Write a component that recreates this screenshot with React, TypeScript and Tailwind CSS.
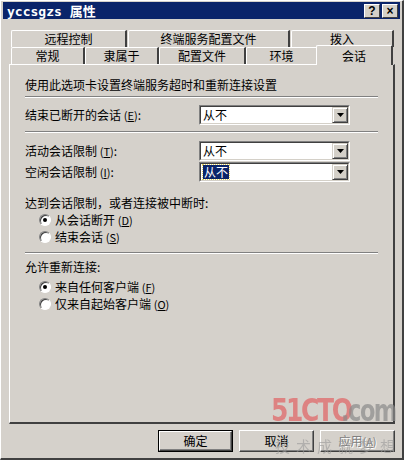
import React from 'react';

const FONT = { fontFamily: '"Noto Sans CJK SC", "Noto Sans", sans-serif' };

function Key({ k }: { k: string }) {
  return (
    <span className="text-[11px]">
      (<span className="underline">{k}</span>)
    </span>
  );
}

function Combo({ selected }: { selected?: boolean }) {
  return (
    <div className="w-[151px] h-[20px] flex border-t border-l border-t-[#808080] border-l-[#808080] border-b border-r border-b-white border-r-white">
      <div className="flex-1 flex border-t border-l border-t-[#404040] border-l-[#404040] border-b border-r border-b-[#d4d0c8] border-r-[#d4d0c8] bg-white">
        <div className="flex-1 flex items-center pl-[2px]">
          <span
            className={
              selected
                ? 'bg-[#0a246a] text-white leading-[14px] px-px outline-1 outline-dotted outline-[#e0d060]'
                : 'text-black leading-[14px]'
            }
          >
            从不
          </span>
        </div>
        <div className="w-[16px] h-[16px] bg-[#d4d0c8] flex items-center justify-center border-t border-l border-t-[#d4d0c8] border-l-[#d4d0c8] border-b border-r border-b-[#404040] border-r-[#404040] shadow-[inset_1px_1px_0_#fff,inset_-1px_-1px_0_#808080]">
          <svg width="7" height="4" viewBox="0 0 7 4">
            <path d="M0 0h7L3.5 4z" fill="#000" />
          </svg>
        </div>
      </div>
    </div>
  );
}

function Radio({ checked, children }: { checked?: boolean; children: React.ReactNode }) {
  return (
    <div className="flex items-center gap-[4px] h-[17px] pl-[29px]">
      <div className="w-[12px] h-[12px] rounded-full bg-white border border-[#808080] border-r-white border-b-white shadow-[inset_1px_1px_0_#404040] flex items-center justify-center">
        {checked && <div className="w-[4px] h-[4px] rounded-full bg-black" />}
      </div>
      <span>{children}</span>
    </div>
  );
}

function Sep() {
  return <div className="mx-[15px] h-[2px] border-t border-t-[#808080] border-b border-b-white" />;
}

function Tab({ w, label, pr }: { w: number; label: string; pr?: boolean }) {
  return (
    <div
      style={{ width: w }}
      className={
        'h-[17px] flex items-center justify-center border-t border-l border-t-white border-l-white rounded-tl-[2px] ' +
        (pr ? 'border-r-2 border-r-[#404040]' : 'border-r border-r-[#808080]')
      }
    >
      {label}
    </div>
  );
}

export default function App() {
  return (
    <div
      style={FONT}
      className="w-[404px] h-[460px] bg-[#d5d1cb] text-[12px] text-black relative overflow-hidden border-t border-l border-white border-r-2 border-b-2 border-r-[#404040] border-b-[#404040] flex flex-col"
    >
      {/* title bar */}
      <div className="mx-[2px] mt-[1px] h-[17px] bg-[#0a246a] flex items-center justify-between pl-[4px] pr-[2px]">
        <span className="text-white font-bold text-[13px] leading-none" style={{ fontFamily: '"DejaVu Sans Mono", "Noto Sans CJK SC", monospace' }}>
          yccsgzs <span style={FONT}>属性</span>
        </span>
        <div className="flex gap-[2px]">
          {['?', '×'].map((c) => (
            <div
              key={c}
              className="w-[16px] h-[14px] bg-[#d4d0c8] border border-t-white border-l-white border-r-[#404040] border-b-[#404040] flex items-center justify-center font-bold text-[12px] leading-none"
              style={{ fontFamily: '"Liberation Sans", sans-serif' }}
            >
              {c}
            </div>
          ))}
        </div>
      </div>

      {/* tabs */}
      <div className="mt-[11px] pl-[10px] flex flex-col">
        <div className="flex gap-[1px]">
          <Tab w={116} label="远程控制" pr />
          <Tab w={162} label="终端服务配置文件" pr />
          <Tab w={103} label="拨入" pr />
        </div>
        <div className="flex relative">
          <Tab w={74} label="常规" pr />
          <Tab w={74} label="隶属于" pr />
          <Tab w={87} label="配置文件" pr />
          <Tab w={71} label="环境" />
          <div className="w-[77px] h-[20px] -mt-[2px] -mb-[1px] -ml-px bg-[#d5d1cb] relative z-10 flex items-center justify-center border-t border-l border-t-white border-l-white border-r-2 border-r-[#404040] rounded-tl-[2px]">
            会话
          </div>
        </div>
      </div>

      {/* panel */}
      <div className="ml-[8px] w-[386px] h-[360px] border-t border-l border-t-white border-l-white border-r-2 border-b-2 border-r-[#404040] border-b-[#404040] flex flex-col">
        <div className="pl-[15px] pt-[11px] h-[31px]">使用此选项卡设置终端服务超时和重新连接设置</div>
        <Sep />
        <div className="flex items-center justify-between pl-[15px] pr-[43px] mt-[7px] h-[20px]">
          <span>
            结束已断开的会话 <Key k="E" />:
          </span>
          <Combo />
        </div>
        <div className="mt-[6px]">
          <Sep />
        </div>
        <div className="flex items-center justify-between pl-[15px] pr-[43px] mt-[8px] h-[20px]">
          <span>
            活动会话限制 <Key k="T" />:
          </span>
          <Combo />
        </div>
        <div className="flex items-center justify-between pl-[15px] pr-[43px] mt-[1px] h-[20px]">
          <span>
            空闲会话限制 <Key k="I" />:
          </span>
          <Combo selected />
        </div>
        <div className="pl-[15px] mt-[13px] h-[16px] leading-[16px]">达到会话限制，或者连接被中断时:</div>
        <Radio checked>
          从会话断开 <Key k="D" />
        </Radio>
        <Radio>
          结束会话 <Key k="S" />
        </Radio>
        <div className="mt-[7px]">
          <Sep />
        </div>
        <div className="pl-[15px] mt-[5px] h-[16px] leading-[16px]">允许重新连接:</div>
        <div className="mt-[3px]">
          <Radio checked>
            来自任何客户端 <Key k="F" />
          </Radio>
          <Radio>
            仅来自起始客户端 <Key k="O" />
          </Radio>
        </div>
      </div>

      {/* buttons */}
      <div className="flex justify-end gap-[6px] pr-[7px] mt-[6px]">
        <div className="w-[75px] h-[22px] border border-black flex">
          <div className="flex-1 flex items-center justify-center border border-t-white border-l-white border-r-[#404040] border-b-[#404040] shadow-[inset_-1px_-1px_0_#808080]">
            确定
          </div>
        </div>
        <div className="w-[75px] h-[22px] flex items-center justify-center border border-t-white border-l-white border-r-[#404040] border-b-[#404040] shadow-[inset_-1px_-1px_0_#808080]">
          取消
        </div>
        <div className="w-[75px] h-[22px] flex items-center justify-center border border-t-white border-l-white border-r-[#404040] border-b-[#404040] shadow-[inset_-1px_-1px_0_#808080] text-[#808080] [text-shadow:1px_1px_0_#fff]">
          应用 <Key k="A" />
        </div>
      </div>

      {/* watermark */}
      <div
        className="absolute left-[270px] top-[395px] pointer-events-none flex items-end leading-none h-[30px]"
        style={{ fontFamily: '"DejaVu Sans", sans-serif' }}
      >
        <span className="text-[32px] font-bold text-[#e07070] opacity-80 tracking-[-3px] scale-x-[0.78] origin-left inline-block w-[70px] whitespace-nowrap">
          51CTO
        </span>
        <span className="text-[30px] font-bold text-[#8a8a8a] opacity-70 tracking-[-2px] scale-x-[0.75] origin-left inline-block w-[55px] whitespace-nowrap">
          .com
        </span>
      </div>
      <div className="absolute left-[274px] top-[437px] pointer-events-none text-[15px] text-[#9a9a9a] opacity-60 tracking-[6px] leading-none whitespace-nowrap">
        技术成就梦想
      </div>
    </div>
  );
}
